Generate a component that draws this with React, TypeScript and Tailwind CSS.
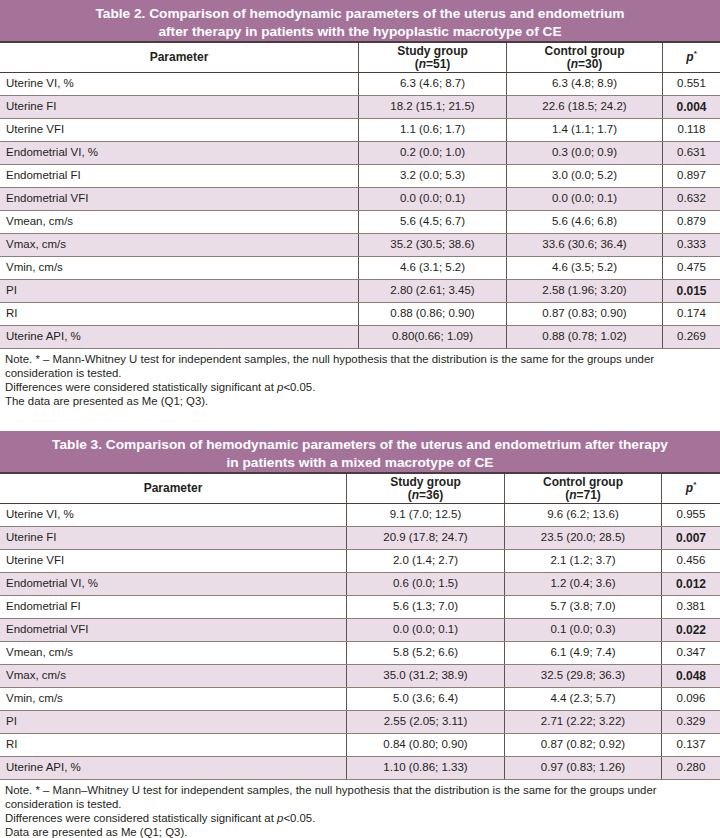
import React from 'react'

type Row = [string, string, string, string, boolean?]

const table2Rows: Row[] = [
  ['Uterine VI, %', '6.3 (4.6; 8.7)', '6.3 (4.8; 8.9)', '0.551'],
  ['Uterine FI', '18.2 (15.1; 21.5)', '22.6 (18.5; 24.2)', '0.004', true],
  ['Uterine VFI', '1.1 (0.6; 1.7)', '1.4 (1.1; 1.7)', '0.118'],
  ['Endometrial VI, %', '0.2 (0.0; 1.0)', '0.3 (0.0; 0.9)', '0.631'],
  ['Endometrial FI', '3.2 (0.0; 5.3)', '3.0 (0.0; 5.2)', '0.897'],
  ['Endometrial VFI', '0.0 (0.0; 0.1)', '0.0 (0.0; 0.1)', '0.632'],
  ['Vmean, cm/s', '5.6 (4.5; 6.7)', '5.6 (4.6; 6.8)', '0.879'],
  ['Vmax, cm/s', '35.2 (30.5; 38.6)', '33.6 (30.6; 36.4)', '0.333'],
  ['Vmin, cm/s', '4.6 (3.1; 5.2)', '4.6 (3.5; 5.2)', '0.475'],
  ['PI', '2.80 (2.61; 3.45)', '2.58 (1.96; 3.20)', '0.015', true],
  ['RI', '0.88 (0.86; 0.90)', '0.87 (0.83; 0.90)', '0.174'],
  ['Uterine API, %', '0.80(0.66; 1.09)', '0.88 (0.78; 1.02)', '0.269'],
]

const table3Rows: Row[] = [
  ['Uterine VI, %', '9.1 (7.0; 12.5)', '9.6 (6.2; 13.6)', '0.955'],
  ['Uterine FI', '20.9 (17.8; 24.7)', '23.5 (20.0; 28.5)', '0.007', true],
  ['Uterine VFI', '2.0 (1.4; 2.7)', '2.1 (1.2; 3.7)', '0.456'],
  ['Endometrial VI, %', '0.6 (0.0; 1.5)', '1.2 (0.4; 3.6)', '0.012', true],
  ['Endometrial FI', '5.6 (1.3; 7.0)', '5.7 (3.8; 7.0)', '0.381'],
  ['Endometrial VFI', '0.0 (0.0; 0.1)', '0.1 (0.0; 0.3)', '0.022', true],
  ['Vmean, cm/s', '5.8 (5.2; 6.6)', '6.1 (4.9; 7.4)', '0.347'],
  ['Vmax, cm/s', '35.0 (31.2; 38.9)', '32.5 (29.8; 36.3)', '0.048', true],
  ['Vmin, cm/s', '5.0 (3.6; 6.4)', '4.4 (2.3; 5.7)', '0.096'],
  ['PI', '2.55 (2.05; 3.11)', '2.71 (2.22; 3.22)', '0.329'],
  ['RI', '0.84 (0.80; 0.90)', '0.87 (0.82; 0.92)', '0.137'],
  ['Uterine API, %', '1.10 (0.86; 1.33)', '0.97 (0.83; 1.26)', '0.280'],
]

function DataTable({
  title,
  cols,
  nStudy,
  nControl,
  rows,
}: {
  title: React.ReactNode
  cols: string
  nStudy: number
  nControl: number
  rows: Row[]
}) {
  const cell = 'border-r border-[#5f534d]'
  return (
    <div>
      <div className="h-[43px] bg-[#a5739a] border-b-2 border-[#4a3b3d] pt-[5px] text-center text-white font-bold text-[13.7px] leading-[18px]">
        {title}
      </div>
      <div className={`grid ${cols} h-[30px] border-b-[1.5px] border-[#4a3d38] font-bold text-[12px] leading-[13px]`}>
        <div className={`${cell} flex items-center justify-center`}>Parameter</div>
        <div className={`${cell} flex flex-col items-center justify-center`}>
          <span>Study group</span>
          <span>
            (<i>n</i>={nStudy})
          </span>
        </div>
        <div className={`${cell} flex flex-col items-center justify-center`}>
          <span>Control group</span>
          <span>
            (<i>n</i>={nControl})
          </span>
        </div>
        <div className="flex items-center justify-center italic">
          p<sup className="text-[8px] -top-[4px]">*</sup>
        </div>
      </div>
      {rows.map(([name, study, control, p, bold], i) => (
        <div
          key={name}
          className={`grid ${cols} h-[23px] border-b-[1.5px] border-[#8b7f78] text-[11.5px] ${
            i % 2 === 1 ? 'bg-[#ebdde8]' : 'bg-white'
          }`}
        >
          <div className={`${cell} flex items-center pl-[6px]`}>{name}</div>
          <div className={`${cell} flex items-center justify-center`}>{study}</div>
          <div className={`${cell} flex items-center justify-center`}>{control}</div>
          <div className={`flex items-center justify-center ${bold ? 'font-bold text-[12px]' : ''}`}>{p}</div>
        </div>
      ))}
    </div>
  )
}

function Notes({ dash, last }: { dash: string; last: string }) {
  return (
    <div className="pl-[5px] pt-[3px] text-[11.4px] leading-[14px] whitespace-nowrap">
      Note. * – {dash} U test for independent samples, the null hypothesis that the distribution is the same for the groups under
      <br />
      consideration is tested.
      <br />
      Differences were considered statistically significant at <i>p</i>&lt;0.05.
      <br />
      {last}
    </div>
  )
}

export default function App() {
  return (
    <div
      className="w-[720px] h-[838px] bg-white text-[#231f20] overflow-hidden"
      style={{ fontFamily: '"Liberation Sans", Arial, sans-serif' }}
    >
      <DataTable
        title={
          <>
            Table 2. Comparison of hemodynamic parameters of the uterus and endometrium
            <br />
            after therapy in patients with the hypoplastic macrotype of CE
          </>
        }
        cols="grid-cols-[359px_148px_156px_1fr]"
        nStudy={51}
        nControl={30}
        rows={table2Rows}
      />
      <Notes dash="Mann-Whitney" last="The data are presented as Me (Q1; Q3)." />
      <div className="h-[23px]" />
      <DataTable
        title={
          <>
            Table 3. Comparison of hemodynamic parameters of the uterus and endometrium after therapy
            <br />
            in patients with a mixed macrotype of CE
          </>
        }
        cols="grid-cols-[347px_158px_157px_1fr]"
        nStudy={36}
        nControl={71}
        rows={table3Rows}
      />
      <Notes dash="Mann–Whitney" last="Data are presented as Me (Q1; Q3)." />
    </div>
  )
}
